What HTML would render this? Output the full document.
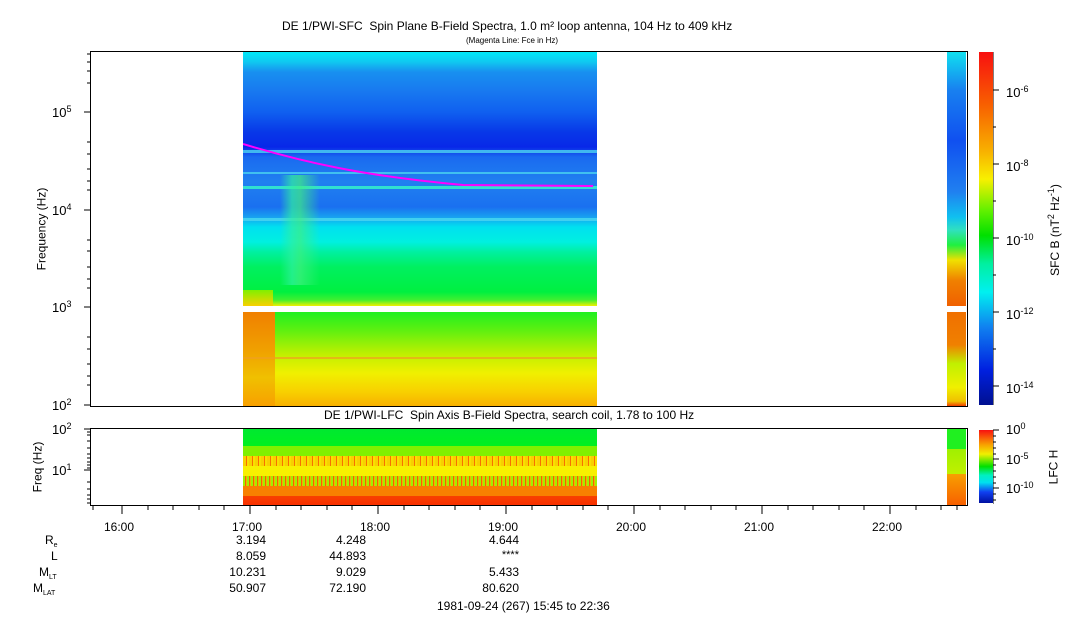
<!DOCTYPE html><html><head><style>
body{margin:0;width:1083px;height:620px;background:#fff;position:relative;overflow:hidden;font-family:"Liberation Sans",sans-serif;color:#000}
.a{position:absolute}
.t{position:absolute;font-size:12px;white-space:nowrap}
.r{text-align:right}
sup{font-size:9px;vertical-align:5px}
.box{position:absolute;border:1px solid #000;box-sizing:border-box}
</style></head><body>
<div class="t" style="left:282px;top:19px">DE 1/PWI-SFC&nbsp; Spin Plane B-Field Spectra, 1.0 m² loop antenna, 104 Hz to 409 kHz</div>
<div class="t" style="left:466px;top:36px;font-size:8px">(Magenta Line: Fce in Hz)</div>

<div class="a" style="left:243px;top:52px;width:354px;height:254px;background:linear-gradient(#00e8f8 0px,#10c8f0 10px,#1890f0 20px,#1878f0 40px,#1060f0 60px,#0838e8 80px,#0828e8 95px,#1a6af0 105px,#2080f0 130px,#1a70f0 155px,#18a0f0 165px,#00e0f0 175px,#00f0e0 190px,#00f0a0 200px,#00f060 215px,#00f040 240px,#40f030 248px,#f0f000 254px)"></div>
<div class="a" style="left:243px;top:150px;width:354px;height:3px;background:#40b8f0"></div>
<div class="a" style="left:243px;top:172px;width:354px;height:2px;background:#40c0f0"></div>
<div class="a" style="left:243px;top:186px;width:354px;height:3px;background:#30e0d0"></div>
<div class="a" style="left:243px;top:218px;width:354px;height:3px;background:#40d0f0"></div>
<div class="a" style="left:280px;top:175px;width:40px;height:110px;background:linear-gradient(90deg,transparent,#30f0a0 30%,#40f080 50%,transparent);opacity:.7"></div>
<div class="a" style="left:243px;top:290px;width:30px;height:16px;background:linear-gradient(#80f000,#f8d000)"></div>
<svg class="a" style="left:243px;top:140px" width="354" height="50"><path d="M0 4 C60 22 120 36 220 45 L350 46" stroke="#ff00ff" stroke-width="2" fill="none"/></svg>
<div class="a" style="left:243px;top:312px;width:354px;height:94px;background:linear-gradient(#20f020,#60f010 20%,#c0f000 45%,#f0f000 65%,#f8d000 85%,#f8b000)"></div>
<div class="a" style="left:243px;top:312px;width:32px;height:94px;background:linear-gradient(#f08000,#f0a000 40%,#f0c000 70%,#f8a000)"></div>
<div class="a" style="left:243px;top:357px;width:354px;height:2px;background:#f0a020;opacity:.7"></div>
<div class="a" style="left:947px;top:52px;width:19px;height:254px;background:linear-gradient(#10e0f0,#1880f0 15%,#1050f0 35%,#2080f0 55%,#10c0f0 65%,#30e0c0 70%,#20f040 76%,#f0e000 82%,#f08000 90%,#f06000)"></div>
<div class="a" style="left:947px;top:312px;width:19px;height:94px;background:linear-gradient(#f07000,#f08000 35%,#c0f000 55%,#f0f000 80%,#f0c000 95%,#f04000)"></div>
<div class="box" style="left:90px;top:51px;width:878px;height:356px"></div>

<div class="t" style="left:52px;top:104px;font-size:13px">10<sup>5</sup></div>
<div class="t" style="left:52px;top:202px;font-size:13px">10<sup>4</sup></div>
<div class="t" style="left:52px;top:299px;font-size:13px">10<sup>3</sup></div>
<div class="t" style="left:52px;top:397px;font-size:13px">10<sup>2</sup></div>
<div class="t" style="left:0px;top:222px;transform:rotate(-90deg);transform-origin:center">Frequency (Hz)</div>
<svg class="a" style="left:80px;top:50px" width="12" height="360" stroke="#000">
<path d="M4 62H10M4 160H10M4 257H10M4 355H10M7 33H10M7 21H10M7 12H10M7 4H10M7 92H10M7 104H10M7 119H10M7 131H10M7 140H10M7 190H10M7 201H10M7 217H10M7 229H10M7 238H10M7 287H10M7 299H10M7 314H10M7 326H10M7 335H10"/></svg>

<div class="a" style="left:979px;top:52px;width:14px;height:353px;background:linear-gradient(#f81010,#f86000 15%,#f8b000 28%,#f8f000 36%,#60f000 45%,#00e000 52%,#00f0a0 60%,#00f0f0 68%,#1080f0 78%,#0020e0 90%,#001090)"></div>
<svg class="a" style="left:993px;top:52px" width="8" height="355" stroke="#000"><path d="M0 0V353M0 38H6M0 112H6M0 186H6M0 260H6M0 334H6M0 75H3M0 149H3M0 223H3M0 297H3"/></svg>
<div class="t" style="left:1006px;top:84px;font-size:13px">10<sup>-6</sup></div>
<div class="t" style="left:1006px;top:158px;font-size:13px">10<sup>-8</sup></div>
<div class="t" style="left:1006px;top:232px;font-size:13px">10<sup>-10</sup></div>
<div class="t" style="left:1006px;top:306px;font-size:13px">10<sup>-12</sup></div>
<div class="t" style="left:1006px;top:380px;font-size:13px">10<sup>-14</sup></div>
<div class="t" style="left:1008px;top:222px;transform:rotate(-90deg);transform-origin:center">SFC B (nT<sup>2</sup> Hz<sup>-1</sup>)</div>

<div class="t" style="left:324px;top:408px">DE 1/PWI-LFC&nbsp; Spin Axis B-Field Spectra, search coil, 1.78 to 100 Hz</div>
<div class="a" style="left:243px;top:429px;width:354px;height:76px;background:linear-gradient(#00e830 0,#00f020 17px,#80f000 17px,#80f000 27px,#f8c000 27px,#f8c000 37px,#f8f000 37px,#f8f000 47px,#c0f000 47px,#d0d000 57px,#f88000 57px,#f88000 67px,#f84000 67px,#f83000 76px)"></div>
<div class="a" style="left:243px;top:456px;width:354px;height:10px;background:repeating-linear-gradient(90deg,#f8d000 0 3px,#f87000 3px 4px,#f8e000 4px 6px)"></div>
<div class="a" style="left:243px;top:476px;width:354px;height:10px;background:repeating-linear-gradient(90deg,#a0f000 0 2px,#f86000 2px 3px,#f8b000 3px 4px)"></div>
<div class="a" style="left:947px;top:429px;width:19px;height:76px;background:linear-gradient(#20f020 0,#20f020 20px,#a0f000 20px,#c0f000 45px,#f8a000 45px,#f86000 76px)"></div>
<div class="box" style="left:90px;top:428px;width:878px;height:78px"></div>
<div class="t" style="left:52px;top:421px;font-size:13px">10<sup>2</sup></div>
<div class="t" style="left:52px;top:462px;font-size:13px">10<sup>1</sup></div>
<div class="t" style="left:12px;top:460px;transform:rotate(-90deg);transform-origin:center">Freq (Hz)</div>
<svg class="a" style="left:80px;top:427px" width="12" height="80" stroke="#000"><path d="M4 2H10M4 43H10M7 14H10M7 21H10M7 27H10M7 31H10M7 35H10M7 38H10M7 41H10M7 55H10M7 62H10M7 68H10M7 72H10M7 76H10M7 5H10M7 8H10"/></svg>
<div class="a" style="left:979px;top:430px;width:14px;height:73px;background:linear-gradient(#f81010,#f8a000 20%,#f0f000 33%,#00e000 50%,#00f0c0 62%,#00e0f0 72%,#1040f0 85%,#0010a0)"></div>
<svg class="a" style="left:993px;top:428px" width="8" height="78" stroke="#000"><path d="M0 2V76M0 2H6M0 31H6M0 60H6M0 8H3M0 14H3M0 20H3M0 26H3M0 37H3M0 43H3M0 49H3M0 55H3M0 66H3M0 72H3"/></svg>
<div class="t" style="left:1006px;top:421px;font-size:13px">10<sup>0</sup></div>
<div class="t" style="left:1006px;top:451px;font-size:13px">10<sup>-5</sup></div>
<div class="t" style="left:1006px;top:480px;font-size:13px">10<sup>-10</sup></div>
<div class="t" style="left:1036px;top:460px;transform:rotate(-90deg);transform-origin:center">LFC H</div>

<svg class="a" style="left:88px;top:506px" width="880" height="12" stroke="#000"><path d="M34 0V8M162 0V8M290 0V8M418 0V8M546 0V8M674 0V8M802 0V8 M5 0V4M60 0V4M85 0V4M111 0V4M136 0V4M188 0V4M213 0V4M239 0V4M264 0V4M316 0V4M341 0V4M367 0V4M392 0V4M444 0V4M469 0V4M495 0V4M520 0V4M572 0V4M597 0V4M623 0V4M648 0V4M700 0V4M725 0V4M751 0V4M776 0V4M828 0V4M853 0V4M869 0V4"/></svg>
<div class="t" style="left:104px;top:520px">16:00</div>
<div class="t" style="left:232px;top:520px">17:00</div>
<div class="t" style="left:360px;top:520px">18:00</div>
<div class="t" style="left:488px;top:520px">19:00</div>
<div class="t" style="left:616px;top:520px">20:00</div>
<div class="t" style="left:744px;top:520px">21:00</div>
<div class="t" style="left:872px;top:520px">22:00</div>

<div class="t" style="left:45px;top:533px">R<span style="font-size:7px;vertical-align:-3px">e</span></div>
<div class="t" style="left:51px;top:549px">L</div>
<div class="t" style="left:39px;top:565px">M<span style="font-size:7px;vertical-align:-3px">LT</span></div>
<div class="t" style="left:33px;top:581px">M<span style="font-size:7px;vertical-align:-3px">LAT</span></div>
<div class="t r" style="left:200px;width:66px;top:533px">3.194</div>
<div class="t r" style="left:200px;width:66px;top:549px">8.059</div>
<div class="t r" style="left:200px;width:66px;top:565px">10.231</div>
<div class="t r" style="left:200px;width:66px;top:581px">50.907</div>
<div class="t r" style="left:300px;width:66px;top:533px">4.248</div>
<div class="t r" style="left:300px;width:66px;top:549px">44.893</div>
<div class="t r" style="left:300px;width:66px;top:565px">9.029</div>
<div class="t r" style="left:300px;width:66px;top:581px">72.190</div>
<div class="t r" style="left:453px;width:66px;top:533px">4.644</div>
<div class="t r" style="left:453px;width:66px;top:549px;font-size:11px">****</div>
<div class="t r" style="left:453px;width:66px;top:565px">5.433</div>
<div class="t r" style="left:453px;width:66px;top:581px">80.620</div>
<div class="t" style="left:437px;top:599px">1981-09-24 (267) 15:45 to 22:36</div>
</body></html>
